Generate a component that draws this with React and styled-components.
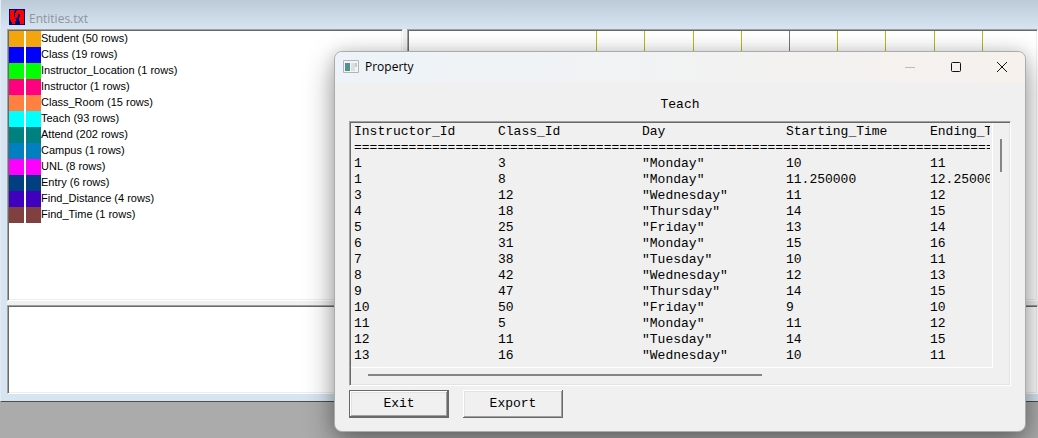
import React from "react";
import styled, { createGlobalStyle } from "styled-components";

const GlobalStyle = createGlobalStyle`
  * { box-sizing: border-box; }
  body { margin: 0; background: #ababab; font-family: "Liberation Sans", Arial, sans-serif; overflow: hidden; }
`;

const mono = `"Liberation Mono", "Courier New", monospace`;

const Desktop = styled.main`
  position: relative;
  min-height: 100vh;
  overflow: hidden;
  background: #ababab;
`;

const MainWindow = styled.section`
  display: flex;
  flex-direction: column;
  height: 402px;
  padding: 0 0 7px 6px;
  background: linear-gradient(#bccad8 0, #d7e4f2 29px);
  border-left: 1px solid #e4eaf3;
  border-bottom: 1px solid #4c4c4c;
`;

const MainTitle = styled.header`
  display: flex;
  align-items: center;
  gap: 4px;
  height: 29px;
  padding: 5px 0 0 2px;
`;

const MainHeading = styled.h1`
  margin: 0;
  padding-top: 3px;
  color: #8f959b;
  font: 12px/16px "Open Sans", sans-serif;
`;

const Panes = styled.div`
  display: flex;
  flex-direction: column;
  flex: 1;
  gap: 4px;
  background: #f0f0f0;
`;

const TopPanes = styled.div`
  display: flex;
  gap: 4px;
  flex: 1;
`;

const Pane = styled.div`
  flex: ${(p) => p.$basis || "1"};
  background: #fff;
  border: 1px solid;
  border-color: #a0a0a0 #fff #fff #a0a0a0;
  box-shadow: inset 1px 1px #696969, inset -1px -1px #eeeeee;
  padding: 1px;
`;

const MessagePane = styled(Pane)`
  flex: 0 0 89px;
`;

const EntityList = styled.ul`
  margin: 0;
  padding: 0;
  list-style: none;
`;

const Entity = styled.li`
  display: flex;
  height: 16px;
  color: #000;
  font-size: 11px;
  line-height: 15px;
  white-space: nowrap;
`;

const Swatch = styled.span`
  width: 32px;
  border: solid ${(p) => p.$color};
  border-width: 0 15px;
  background: #fff;
`;

const Chart = styled.svg`
  display: block;
  width: 100%;
  height: 100%;
`;

const Dialog = styled.section`
  position: absolute;
  top: 51px;
  left: 334px;
  right: 12px;
  background: #f0f0f0;
  border: 1px solid #a9abad;
  border-radius: 8px;
  overflow: hidden;
  box-shadow: 0 12px 30px rgba(0, 0, 0, 0.38), 0 0 16px rgba(0, 0, 0, 0.14);
`;

const DialogTitle = styled.header`
  display: flex;
  align-items: center;
  height: 30px;
  padding: 0 3px 0 8px;
  gap: 6px;
  background: linear-gradient(90deg, #edf3f8, #f4f2f0 75%, #f6f1ed);
`;

const DialogHeading = styled.h2`
  flex: 1;
  margin: 0;
  color: #000;
  font: 12px/16px "Open Sans", sans-serif;
`;

const WindowButton = styled.button`
  display: flex;
  align-items: center;
  justify-content: center;
  width: 40px;
  height: 28px;
  padding: 0;
  border: 0;
  background: transparent;
  color: ${(p) => (p.disabled ? "#bdbbb9" : "#111")};
`;

const DialogBody = styled.div`
  padding: 0 14px 13px;
`;

const EntityName = styled.h3`
  margin: 0;
  padding: 15px 0 8px;
  color: #000;
  font: 13px/16px ${mono};
  text-align: center;
`;

const Report = styled.div`
  display: grid;
  grid-template-columns: 1fr 17px;
  grid-template-rows: 246px 17px;
  border: 1px solid;
  border-color: #a0a0a0 #fff #fff #a0a0a0;
  box-shadow: inset 1px 1px #696969, inset -1px -1px #e3e3e3;
`;

const Viewport = styled.div`
  min-width: 0;
  overflow: hidden;
  margin: 1px 0 0 1px;
  padding: 1px 0 0 3px;
  border: solid #fff;
  border-width: 0 1px 1px 0;
`;

const TextArea = styled.div`
  overflow: hidden;
  margin-right: 2px;
`;

const Table = styled.table`
  width: 720px;
  table-layout: fixed;
  border-collapse: collapse;
  color: #000;
  font: 13px/16px ${mono};
  text-align: left;
`;

const Cell = styled.td`
  width: 144px;
  height: 16px;
  padding: 0;
  font-weight: normal;
  white-space: nowrap;
`;

const ScrollTrackY = styled.div`
  padding: 17px 0 0 7px;
`;

const ScrollTrackX = styled.div`
  padding: 6px 0 0 18px;
`;

const ThumbY = styled.div`
  width: 2px;
  height: 33px;
  background: #858585;
`;

const ThumbX = styled.div`
  width: 63%;
  height: 2px;
  background: #858585;
`;

const Actions = styled.footer`
  display: flex;
  gap: 14px;
  padding-top: 4px;
`;

const ActionButton = styled.button`
  width: 100px;
  height: 28px;
  padding: 0;
  border: ${(p) => (p.$primary ? "1px solid #696969" : "0")};
  background: #f0f0f0;
  box-shadow: inset -1px -1px #696969, inset 1px 1px #fff, inset -2px -2px #a0a0a0, inset 2px 2px #e3e3e3;
  color: #000;
  font: 13px/16px ${mono};
`;

const entities = [
  ["Student (50 rows)", "#f2a50c"],
  ["Class (19 rows)", "#0000ff"],
  ["Instructor_Location (1 rows)", "#00ff00"],
  ["Instructor (1 rows)", "#ff0080"],
  ["Class_Room (15 rows)", "#ff8040"],
  ["Teach (93 rows)", "#00ffff"],
  ["Attend (202 rows)", "#008080"],
  ["Campus (1 rows)", "#0080c0"],
  ["UNL (8 rows)", "#ff00ff"],
  ["Entry (6 rows)", "#004080"],
  ["Find_Distance (4 rows)", "#4000c0"],
  ["Find_Time (1 rows)", "#804040"],
];

const columns = ["Instructor_Id", "Class_Id", "Day", "Starting_Time", "Ending_Time"];

const rows = [
  ["1", "3", "Monday", "10", "11"],
  ["1", "8", "Monday", "11.250000", "12.250000"],
  ["3", "12", "Wednesday", "11", "12"],
  ["4", "18", "Thursday", "14", "15"],
  ["5", "25", "Friday", "13", "14"],
  ["6", "31", "Monday", "15", "16"],
  ["7", "38", "Tuesday", "10", "11"],
  ["8", "42", "Wednesday", "12", "13"],
  ["9", "47", "Thursday", "14", "15"],
  ["10", "50", "Friday", "9", "10"],
  ["11", "5", "Monday", "11", "12"],
  ["12", "11", "Tuesday", "14", "15"],
  ["13", "16", "Wednesday", "10", "11"],
];

const OLIVE = "#b9b91c";
const timeLines = [
  [187, OLIVE], [235, OLIVE], [284, OLIVE], [332, OLIVE], [380, "#777777"],
  [428, OLIVE], [476, OLIVE], [525, OLIVE], [573, OLIVE],
];

const AppIcon = () => (
  <svg width="16" height="16" viewBox="0 0 16 16" aria-hidden="true" shapeRendering="crispEdges">
    <path fill="#000080" d="M0 0h16v16H0z" />
    <path fill="#f00" d="M1 1h5v1H5v6h1v2h1v2H6v3H3v-2H2v-2H1zM7 2h1V1h6v1h1v13h-4v-3h-1V8h1V5H9v3H8v1H6V4h1z" />
  </svg>
);

const PropertyIcon = () => (
  <svg width="16" height="14" viewBox="0 0 16 14" aria-hidden="true">
    <defs>
      <linearGradient id="screen" x2="1" y2="1">
        <stop stopColor="#5d84b4" />
        <stop offset="1" stopColor="#42a06b" />
      </linearGradient>
    </defs>
    <path fill="#f4f4f4" stroke="#aeb5bb" d="M.5.5h15v12H.5z" />
    <path fill="url(#screen)" d="M2 3h5v8H2z" />
    <path fill="#dedede" d="M8 3h4v8H8z" />
    <path fill="#b4d7c1" d="M12 3h2v4h-2z" />
  </svg>
);

export default function App() {
  return (
    <Desktop>
      <GlobalStyle />
      <MainWindow>
        <MainTitle>
          <AppIcon />
          <MainHeading>Entities.txt</MainHeading>
        </MainTitle>
        <Panes>
          <TopPanes>
            <Pane $basis="0 0 396px">
              <EntityList>
                {entities.map(([label, color]) => (
                  <Entity key={label}><Swatch $color={color} />{label}</Entity>
                ))}
              </EntityList>
            </Pane>
            <Pane>
              <Chart aria-hidden="true">
                {timeLines.map(([x, color]) => (
                  <rect key={x} x={x} width="1" height="100%" fill={color} />
                ))}
              </Chart>
            </Pane>
          </TopPanes>
          <MessagePane />
        </Panes>
      </MainWindow>
      <Dialog role="dialog" aria-labelledby="dialog-title">
        <DialogTitle>
          <PropertyIcon />
          <DialogHeading id="dialog-title">Property</DialogHeading>
          <WindowButton disabled aria-label="Minimize">
            <svg width="10" height="10" viewBox="0 0 10 10"><path d="M0 5.5h10" stroke="currentColor" /></svg>
          </WindowButton>
          <WindowButton aria-label="Maximize">
            <svg width="10" height="10" viewBox="0 0 10 10"><rect x=".5" y=".5" width="9" height="9" rx="1" fill="none" stroke="currentColor" /></svg>
          </WindowButton>
          <WindowButton aria-label="Close">
            <svg width="12" height="12" viewBox="0 0 12 12"><path d="M1 1l10 10M11 1L1 11" stroke="currentColor" /></svg>
          </WindowButton>
        </DialogTitle>
        <DialogBody>
          <EntityName>Teach</EntityName>
          <Report>
            <Viewport>
              <TextArea>
                <Table>
                  <thead>
                    <tr>{columns.map((c) => <Cell as="th" scope="col" key={c}>{c}</Cell>)}</tr>
                  </thead>
                  <tbody>
                    <tr><Cell colSpan={5}>{"=".repeat(92)}</Cell></tr>
                    {rows.map(([id, cls, day, start, end]) => (
                      <tr key={id + "-" + cls}>
                        <Cell>{id}</Cell><Cell>{cls}</Cell><Cell>"{day}"</Cell><Cell>{start}</Cell><Cell>{end}</Cell>
                      </tr>
                    ))}
                  </tbody>
                </Table>
              </TextArea>
            </Viewport>
            <ScrollTrackY><ThumbY /></ScrollTrackY>
            <ScrollTrackX><ThumbX /></ScrollTrackX>
          </Report>
          <Actions>
            <ActionButton $primary>Exit</ActionButton>
            <ActionButton>Export</ActionButton>
          </Actions>
        </DialogBody>
      </Dialog>
    </Desktop>
  );
}
